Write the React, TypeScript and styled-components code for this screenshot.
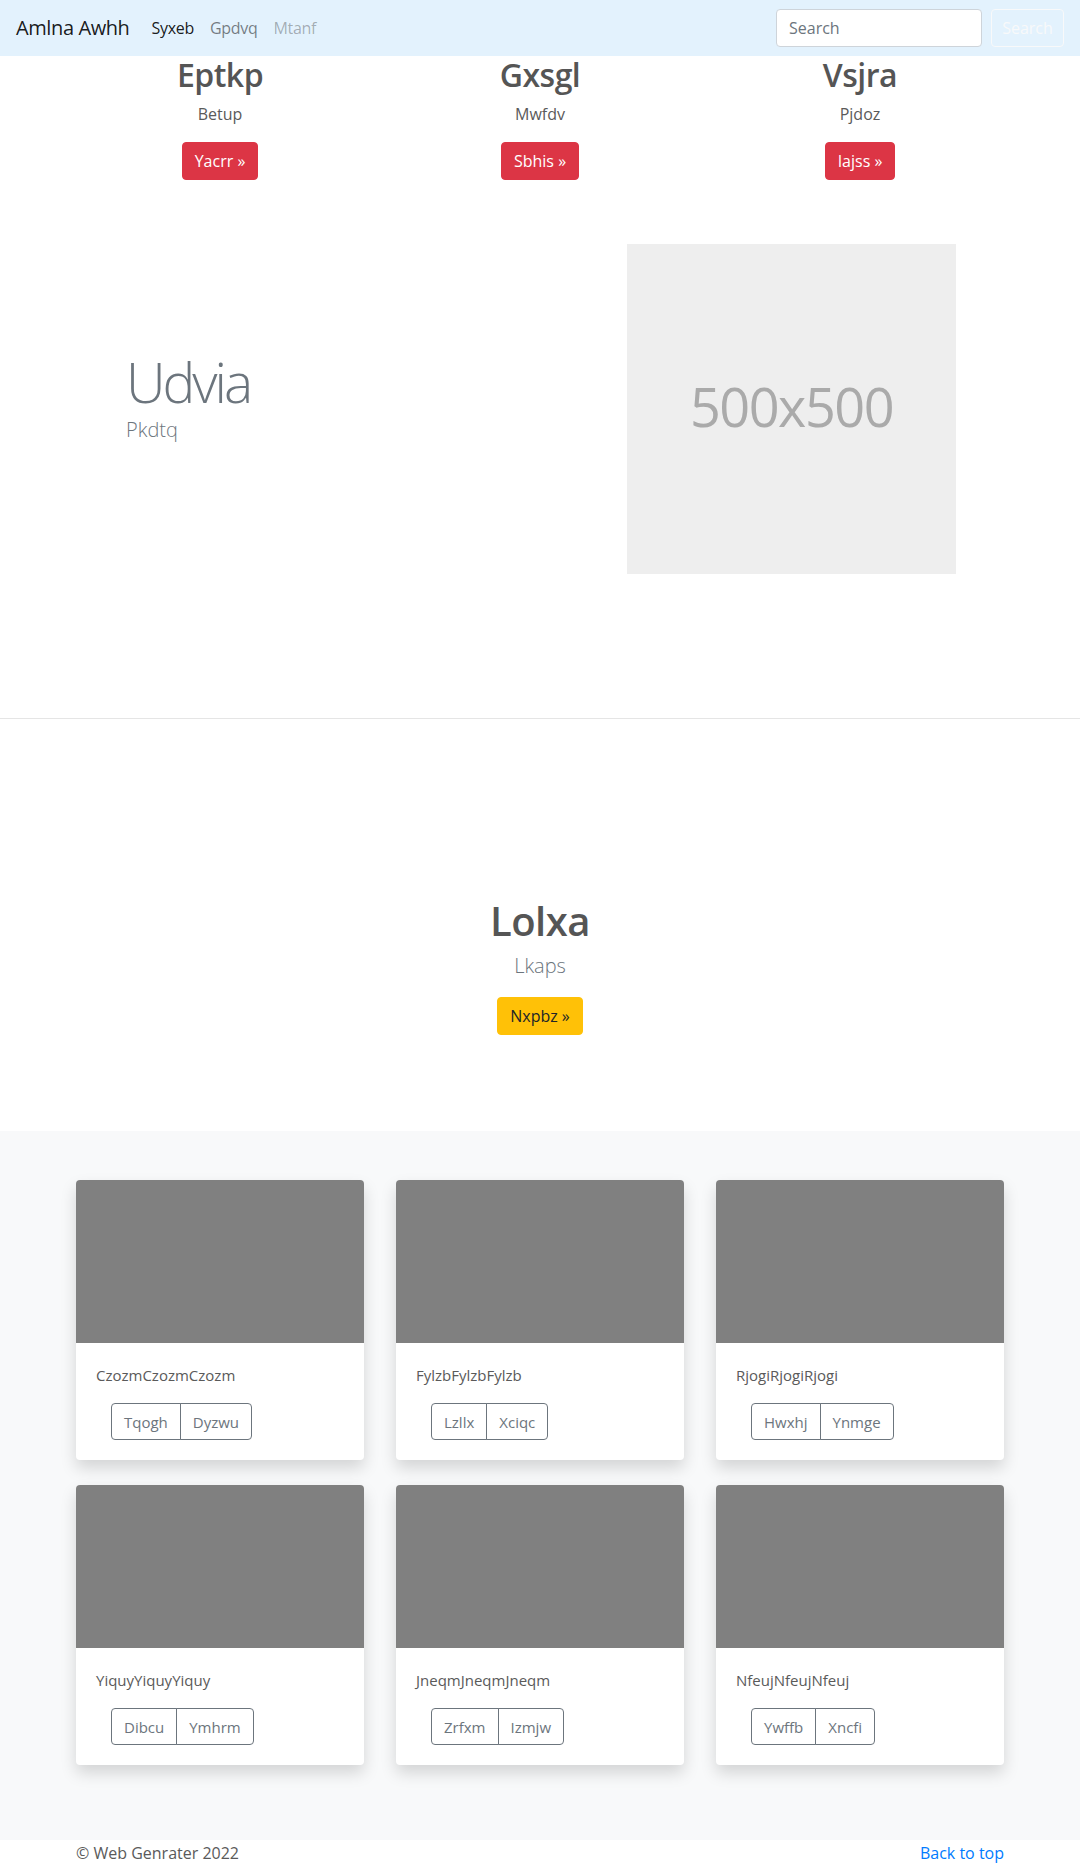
import styled, { createGlobalStyle } from 'styled-components'

const GlobalStyle = createGlobalStyle`
  body {
    margin: 0;
    font-family: "Open Sans", "Noto Sans", sans-serif;
    font-size: 16px;
    line-height: 1.5;
    color: #5a5a5a;
    background: #fff;
  }
  * {
    box-sizing: border-box;
  }
`

const columns = [
  { title: 'Eptkp', text: 'Betup', action: 'Yacrr' },
  { title: 'Gxsgl', text: 'Mwfdv', action: 'Sbhis' },
  { title: 'Vsjra', text: 'Pjdoz', action: 'Iajss' }
]

const cards = [
  { text: 'CzozmCzozmCzozm', a: 'Tqogh', b: 'Dyzwu' },
  { text: 'FylzbFylzbFylzb', a: 'Lzllx', b: 'Xciqc' },
  { text: 'RjogiRjogiRjogi', a: 'Hwxhj', b: 'Ynmge' },
  { text: 'YiquyYiquyYiquy', a: 'Dibcu', b: 'Ymhrm' },
  { text: 'JneqmJneqmJneqm', a: 'Zrfxm', b: 'Izmjw' },
  { text: 'NfeujNfeujNfeuj', a: 'Ywffb', b: 'Xncfi' }
]

const App = () => {
  return (
    <>
      <GlobalStyle />
      <Navbar>
        <Brand>Amlna Awhh</Brand>
        <NavList>
          <NavLink $state="active">Syxeb</NavLink>
          <NavLink>Gpdvq</NavLink>
          <NavLink $state="disabled">Mtanf</NavLink>
        </NavList>
        <SearchForm>
          <SearchInput placeholder="Search" />
          <SearchButton>Search</SearchButton>
        </SearchForm>
      </Navbar>

      <Container>
        <Marketing>
          {columns.map((c) => (
            <MarketingCol key={c.title}>
              <ColTitle>{c.title}</ColTitle>
              <ColText>{c.text}</ColText>
              <ColText>
                <Button $variant="danger">{c.action} &raquo;</Button>
              </ColText>
            </MarketingCol>
          ))}
        </Marketing>

        <Featurette>
          <FeaturetteText>
            <DisplayHeading>Udvia</DisplayHeading>
            <Lead $muted>Pkdtq</Lead>
          </FeaturetteText>
          <Placeholder>500x500</Placeholder>
        </Featurette>
      </Container>

      <Divider />

      <Hero>
        <HeroTitle>Lolxa</HeroTitle>
        <Lead>Lkaps</Lead>
        <ColText>
          <Button $variant="warning">Nxpbz &raquo;</Button>
        </ColText>
      </Hero>

      <Album>
        <Container>
          <CardGrid>
            {cards.map((c) => (
              <Card key={c.text}>
                <CardImage />
                <CardBody>
                  <CardText>{c.text}</CardText>
                  <BtnGroup>
                    <GroupButton>{c.a}</GroupButton>
                    <GroupButton>{c.b}</GroupButton>
                  </BtnGroup>
                </CardBody>
              </Card>
            ))}
          </CardGrid>
        </Container>
      </Album>

      <Container>
        <Footer>
          <FooterText>&copy; Web Genrater 2022</FooterText>
          <FooterLink href="#">Back to top</FooterLink>
        </Footer>
      </Container>
    </>
  )
}

const Navbar = styled.nav`
  height: 56px;
  background-color: #e3f2fd;
  display: flex;
  align-items: center;
  padding: 0 16px;
`

const Brand = styled.a`
  font-size: 20px;
  line-height: 30px;
  letter-spacing: -0.4px;
  color: rgba(0, 0, 0, 0.9);
  margin-right: 14px;
`

const NavList = styled.div`
  display: flex;
  align-items: center;
`

const NavLink = styled.a<{ $state?: 'active' | 'disabled' }>`
  padding: 0 8px;
  font-size: 16px;
  letter-spacing: -0.3px;
  color: ${(p) =>
    p.$state === 'active'
      ? 'rgba(0, 0, 0, 0.9)'
      : p.$state === 'disabled'
        ? 'rgba(0, 0, 0, 0.3)'
        : 'rgba(0, 0, 0, 0.5)'};
`

const SearchForm = styled.form`
  margin-left: auto;
  display: flex;
  align-items: center;
  gap: 9px;
`

const SearchInput = styled.input`
  width: 206px;
  height: 38px;
  padding: 6px 12px;
  font-family: inherit;
  font-size: 16px;
  color: #495057;
  background: #fff;
  border: 1px solid #ced4da;
  border-radius: 4px;
  outline: none;

  &::placeholder {
    color: #6c757d;
  }
`

const SearchButton = styled.button`
  width: 73px;
  height: 38px;
  font-family: inherit;
  font-size: 16px;
  color: #f8f9fa;
  background: transparent;
  border: 1px solid #f8f9fa;
  border-radius: 4px;
`

const Container = styled.div`
  width: 960px;
  margin: 0 auto;
  padding: 0 16px;
`

const Marketing = styled.div`
  display: grid;
  grid-template-columns: repeat(3, 1fr);
  column-gap: 32px;
`

const MarketingCol = styled.div`
  text-align: center;
`

const ColTitle = styled.h2`
  margin: 0 0 8px;
  font-size: 32px;
  font-weight: 600;
  line-height: 1.2;
  letter-spacing: -0.5px;
  color: #555;
`

const ColText = styled.p`
  margin: 0 0 16px;
`

const Button = styled.a<{ $variant: 'danger' | 'warning' }>`
  display: inline-block;
  padding: 6px 12px;
  font-size: 16px;
  line-height: 24px;
  border-radius: 4px;
  border: 1px solid ${(p) => (p.$variant === 'danger' ? '#dc3545' : '#ffc107')};
  background-color: ${(p) => (p.$variant === 'danger' ? '#dc3545' : '#ffc107')};
  color: ${(p) => (p.$variant === 'danger' ? '#fff' : '#212529')};
`

const Featurette = styled.div`
  margin-top: 48px;
  display: grid;
  grid-template-columns: 1fr 329px;
  align-items: center;
  padding: 0 48px 0 50px;
`

const FeaturetteText = styled.div`
  padding-bottom: 24px;
`

const DisplayHeading = styled.h1`
  margin: 0;
  font-size: 55px;
  font-weight: 300;
  line-height: 1.2;
  letter-spacing: -3px;
  color: #6c757d;
`

const Lead = styled.p<{ $muted?: boolean }>`
  margin: 0 0 ${(p) => (p.$muted ? '0' : '16px')};
  font-size: 20px;
  font-weight: 300;
  line-height: 1.5;
  color: #6c757d;
`

const Placeholder = styled.div`
  width: 329px;
  height: 330px;
  padding-bottom: 6px;
  background-color: #eee;
  color: #aaa;
  font-size: 54px;
  letter-spacing: -1.5px;
  display: flex;
  align-items: center;
  justify-content: center;
`

const Divider = styled.hr`
  margin: 144px 0 0;
  border: 0;
  border-top: 1px solid rgba(0, 0, 0, 0.1);
`

const Hero = styled.section`
  padding: 178px 0 80px;
  text-align: center;
`

const HeroTitle = styled.h1`
  margin: 0 0 6px;
  font-size: 40px;
  font-weight: 600;
  line-height: 1.2;
  letter-spacing: -0.5px;
  color: #555;
`

const Album = styled.section`
  background-color: #f8f9fa;
  padding: 49px 0 75px;
`

const CardGrid = styled.div`
  display: grid;
  grid-template-columns: repeat(3, 1fr);
  gap: 25px 32px;
`

const Card = styled.div`
  background: #fff;
  border-radius: 4px;
  overflow: hidden;
  box-shadow: 0 8px 16px rgba(0, 0, 0, 0.15);
`

const CardImage = styled.div`
  height: 163px;
  background-color: #808080;
`

const CardBody = styled.div`
  padding: 20px;
`

const CardText = styled.p`
  margin: 0 0 16px;
  font-size: 15px;
  line-height: 24px;
`

const BtnGroup = styled.div`
  display: inline-flex;
  margin-left: 15px;
`

const GroupButton = styled.button`
  height: 37px;
  padding: 0 12px;
  font-family: inherit;
  font-size: 15px;
  color: #6c757d;
  background: transparent;
  border: 1px solid #6c757d;

  &:first-child {
    border-radius: 4px 0 0 4px;
  }

  & + & {
    margin-left: -1px;
    border-radius: 0 4px 4px 0;
  }
`

const Footer = styled.footer`
  display: flex;
  justify-content: space-between;
  align-items: center;
  padding-top: 1px;
`

const FooterText = styled.p`
  margin: 0;
  font-size: 16px;
`

const FooterLink = styled.a`
  color: #007bff;
  text-decoration: none;
  font-size: 16px;
`

export default App
